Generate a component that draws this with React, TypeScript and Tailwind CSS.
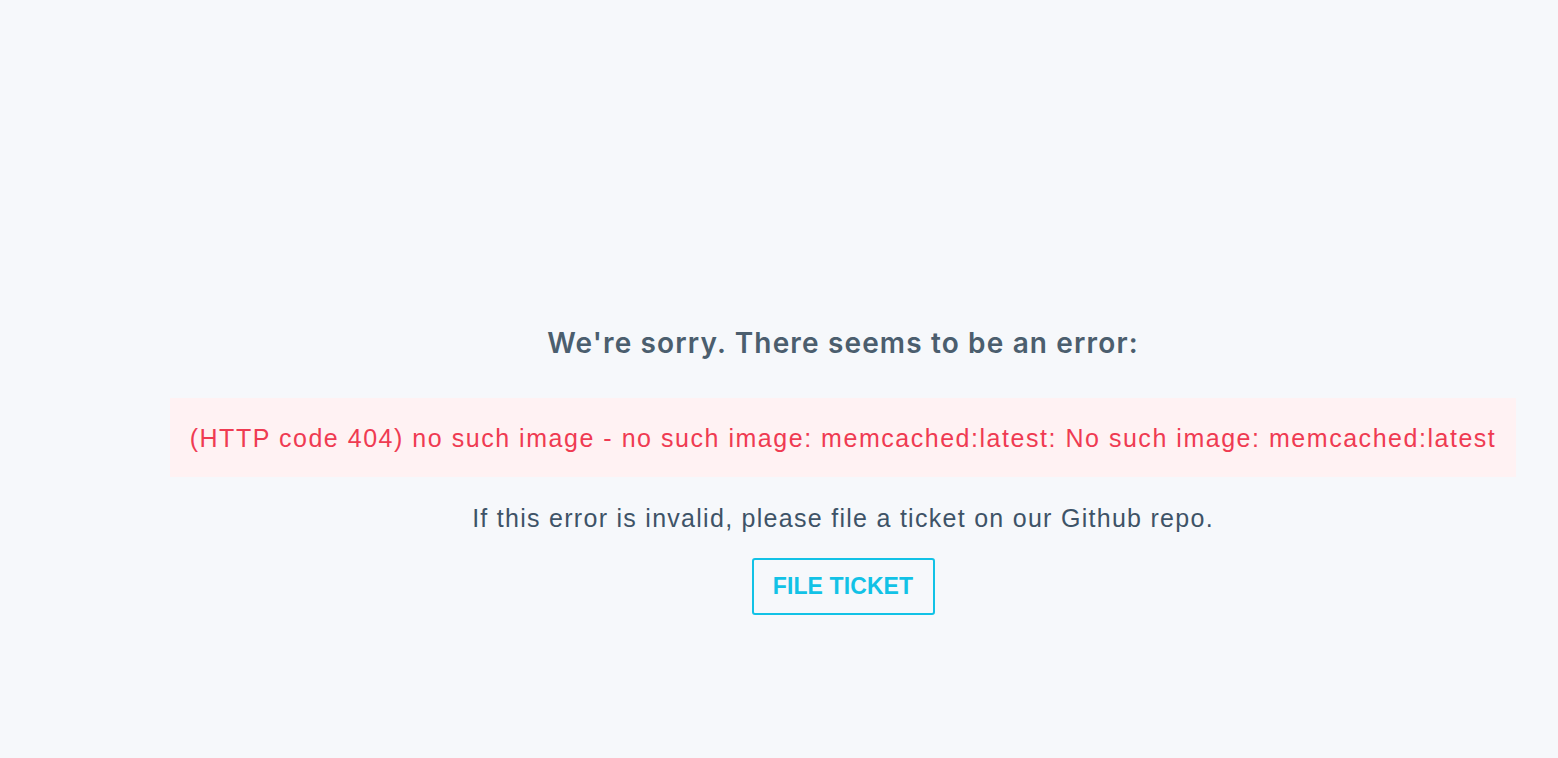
export default function App() {
  return (
    <div className="min-h-[758px] w-full bg-[#f6f8fb] font-['Liberation_Sans',Arial,sans-serif]">
      <div className="ml-[170px] mr-[42px] flex flex-col items-center pt-[322px]">
        <h1 className="font-['Inter','Liberation_Sans',sans-serif] text-[28px] leading-[42px] font-semibold tracking-[1.15px] text-[#4b5e6e]">
          We're sorry. There seems to be an error:
        </h1>
        <div className="mt-[34px] flex h-[79px] w-full items-center justify-center bg-[#fff2f3]">
          <p className="whitespace-nowrap text-[25px] leading-[30px] tracking-[1.53px] text-[#ef3b52]">
            (HTTP code 404) no such image - no such image: memcached:latest: No such image: memcached:latest
          </p>
        </div>
        <p className="mt-[26px] text-[25px] leading-[30px] tracking-[1.28px] text-[#3e5367]">
          If this error is invalid, please file a ticket on our Github repo.
        </p>
        <button className="mt-[25px] h-[57px] w-[183px] rounded-[3px] border-2 border-[#12c2e6] text-[23px] font-bold tracking-[0.1px] text-[#12c2e6]">
          FILE TICKET
        </button>
      </div>
    </div>
  );
}
